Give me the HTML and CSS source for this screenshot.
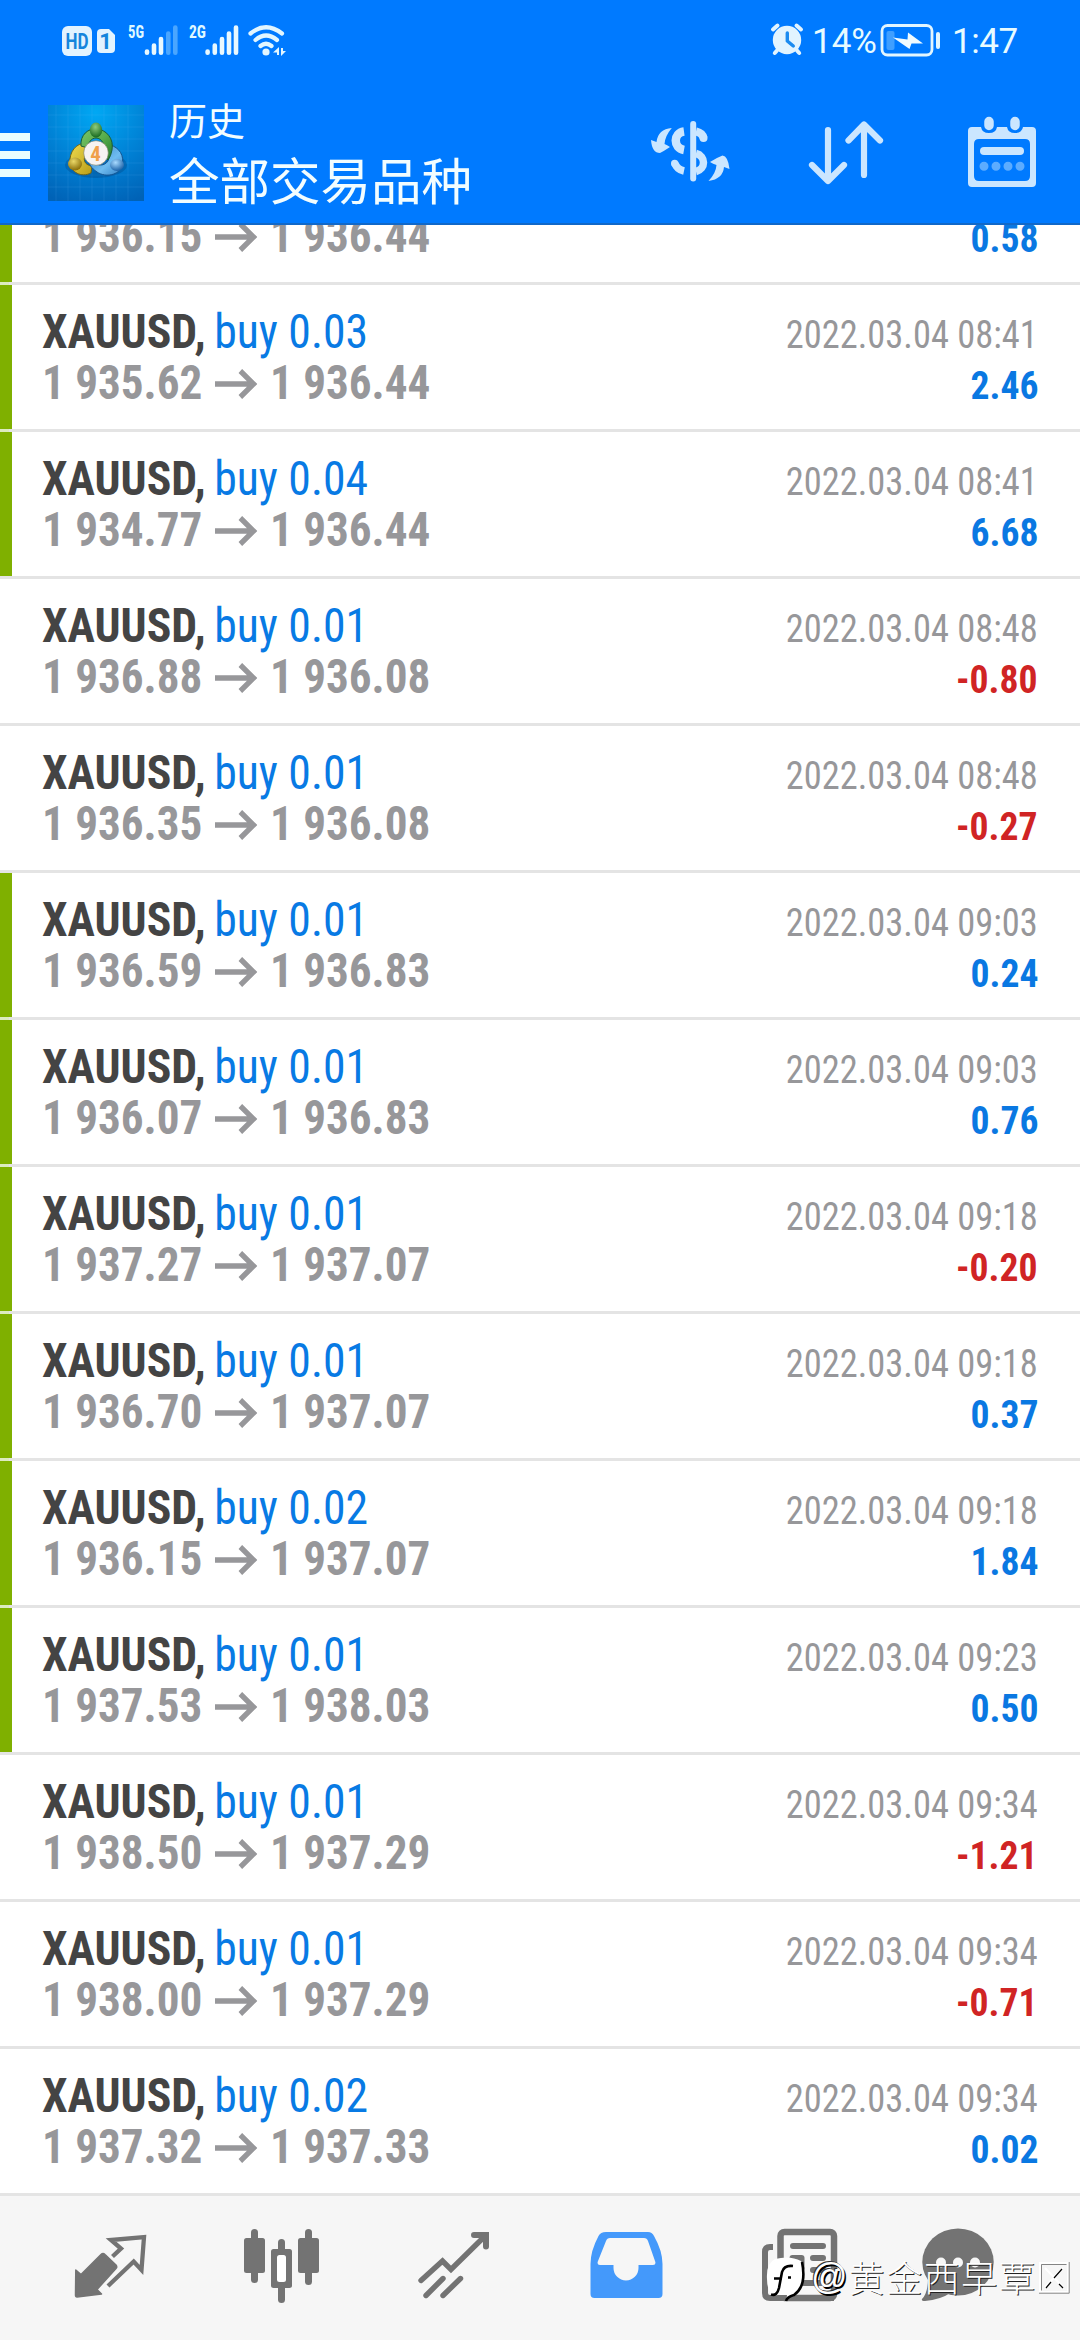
FILE: index.html
```
<!DOCTYPE html>
<html lang="zh-CN">
<head>
<meta charset="utf-8">
<title>历史</title>
<link rel="stylesheet" href="styles.css">
</head>
<body>
<svg width="0" height="0" class="defs">
  <symbol id="arrow" viewBox="0 0 45 30"><path d="M0 15H41M27 2L41 15L27 28" fill="none" stroke="#97979a" stroke-width="5.6"/></symbol>
</svg>
<div class="screen">
  <header class="header">
    <div class="status">
      <svg class="status-left" width="230" height="44" viewBox="60 18 230 44">
        <rect x="62" y="26" width="30" height="30" rx="6" fill="#e2f3ff"/>
        <text x="77" y="48.6" class="badge" textLength="23" lengthAdjust="spacingAndGlyphs">HD</text>
        <path d="M101 29h8l6 6v14a4 4 0 0 1-4 4h-10a4 4 0 0 1-4-4v-16a4 4 0 0 1 4-4z" fill="#e2f3ff"/>
        <text x="105.5" y="48.6" class="badge">1</text>
        <text x="128" y="38" class="net" textLength="16" lengthAdjust="spacingAndGlyphs">5G</text>
        <g stroke="#e8f8ff" stroke-width="4.6" stroke-linecap="round">
          <path d="M147 51.5v1.2M154 45.5v7.2M161 39v13.7"/>
          <path d="M168.3 33.500v19.200M175.300 27.500v25.200" stroke="#4aa6ff"/>
          <path d="M207.600 51.500v1.200M214.800 45.500v7.200M222 39v13.700M229 33.500v19.200M236 27.500v25.200"/>
        </g>
        <text x="189" y="38" class="net" textLength="17" lengthAdjust="spacingAndGlyphs">2G</text>
        <g fill="none" stroke="#e2f6ff" stroke-width="4.200" stroke-linecap="round">
          <path d="M250.500 33.500Q266 21 282 33.500M255.500 40Q266 31 277 40M260.500 46Q266 41.500 271.500 46"/>
        </g>
        <circle cx="266" cy="52" r="3.600" fill="#e2f6ff"/>
        <path d="M273 52.500L279 47v8h-2v-2.500zM281 48v8l5-5h-3V48z" fill="#e2f6ff"/>
      </svg>
      <div class="status-right">
        <svg width="36" height="36" viewBox="767 23 36 36">
          <g stroke="#e2f4ff" stroke-width="4" stroke-linecap="round" fill="none"><path d="M771 30.500l4.500-4M799 30.500l-4.500-4M775 51.500l-2.200 2.500M795 51.500l2.200 2.500"/></g>
          <circle cx="785" cy="41" r="14.200" fill="#e2f4ff"/>
          <path d="M785.300 34v8l6 5" fill="none" stroke="#1b8bf0" stroke-width="3.400" stroke-linecap="round" stroke-linejoin="round"/>
        </svg>
        <span class="battery-text">14%</span>
        <svg class="battery" width="62" height="36" viewBox="880 22 62 36">
          <rect x="882" y="25.500" width="50" height="29.500" rx="5.500" fill="none" stroke="#e2f6ff" stroke-width="2.800"/>
          <rect x="886.500" y="31" width="8" height="19" rx="2" fill="#409fff"/>
          <path d="M893 37.500L907.500 39.500L908 32.500L923 43.500L911.500 43.500L909.500 49Z" fill="#f0fbff"/>
          <path d="M938 34v13" stroke="#e2f6ff" stroke-width="4" stroke-linecap="round"/>
        </svg>
        <span class="clock">1:47</span>
      </div>
    </div>
    <div class="toolbar">
      <div class="menu"><i></i><i></i><i></i></div>
      <svg class="logo" width="96" height="96" viewBox="0 0 96 96">
        <defs>
          <radialGradient id="bg" cx=".5" cy=".08" r="1"><stop offset="0" stop-color="#00a8f4"/><stop offset=".55" stop-color="#0080d4"/><stop offset="1" stop-color="#0062b6"/></radialGradient>
          <linearGradient id="gr" x1="0" y1="0" x2="1" y2="1"><stop offset="0" stop-color="#7cc46a"/><stop offset=".5" stop-color="#57ad4c"/><stop offset="1" stop-color="#237a2c"/></linearGradient>
          <linearGradient id="ye" x2="1" y2="1"><stop offset="0" stop-color="#f0dc50"/><stop offset="1" stop-color="#b89d18"/></linearGradient>
          <linearGradient id="bl" x2="1" y2="1"><stop offset="0" stop-color="#2a7cc2"/><stop offset=".6" stop-color="#6fbcf0"/><stop offset="1" stop-color="#2f7fc4"/></linearGradient>
          <radialGradient id="gb" cx=".45" cy=".3" r=".7"><stop offset="0" stop-color="#8fcc7c"/><stop offset="1" stop-color="#186a20"/></radialGradient>
          <radialGradient id="yb" cx=".4" cy=".3" r=".7"><stop offset="0" stop-color="#ead868"/><stop offset="1" stop-color="#8a6e08"/></radialGradient>
          <radialGradient id="bb" cx=".4" cy=".3" r=".7"><stop offset="0" stop-color="#a8daff"/><stop offset="1" stop-color="#1c62a8"/></radialGradient>
        </defs>
        <rect width="96" height="96" fill="url(#bg)"/>
        <path d="M8 0v96M20 0v96M32 0v96M44 0v96M56 0v96M68 0v96M80 0v96M0 10h96M0 22h96M0 34h96M0 46h96M0 58h96M0 70h96M0 82h96" stroke="#6cc4ff" stroke-opacity=".13"/>
        <ellipse cx="48" cy="60" rx="31" ry="13" fill="#003c78" opacity=".3"/>
        <path d="M38 38C28 38 21 47 22 58C23 67 33 73 43 68L44 61C36 60 34 54 39 47Z" fill="url(#ye)" stroke="#6d6418"/>
        <path d="M62 40C71 42 77 51 74 61C71 70 58 73 49 67C43 63 41 59 40 55C48 61 56 62 60 56C62 51 62 46 62 40Z" fill="url(#bl)" stroke="#155592"/>
        <path d="M33 41C32 30 40 23 49 24C59 25 66 34 64 45Q63 51 60 55L55 50C58 40 54 33 48 33C43 33 40 38 40 43Z" fill="url(#gr)" stroke="#1b5e35"/>
        <ellipse cx="48" cy="25" rx="6.200" ry="7.500" fill="url(#gb)"/>
        <ellipse cx="27" cy="59" rx="7" ry="6.500" fill="url(#yb)"/>
        <ellipse cx="69" cy="60" rx="7" ry="6" fill="url(#bb)"/>
        <circle cx="48" cy="48" r="12.300" fill="#f6f3f2" stroke="#7a7a60" stroke-opacity=".6"/>
        <text x="47.500" y="55.500" class="logo-num">4</text>
      </svg>
      <div class="titles"><div class="sub">历史</div><div class="main">全部交易品种</div></div>
      <div class="actions">
        <svg width="100" height="100" viewBox="640 105 100 100">
          <g fill="none" stroke="#cbe6ff">
            <path d="M693.200 124v54.500" stroke-width="6" stroke-linecap="round"/>
            <path d="M684 131.500C673 133 673 148 684 150" stroke-width="8.500"/>
            <path d="M675 163.500Q677 169.500 684 171" stroke-width="7.500"/><circle cx="674.700" cy="163.500" r="3.700" fill="#cbe6ff" stroke="none"/>
            <path d="M696 131.500Q702.500 133 703.500 138" stroke-width="8"/><circle cx="703.500" cy="138" r="4" fill="#cbe6ff" stroke="none"/>
            <path d="M696 153.500C706 156 706 169 696 171.500" stroke-width="7.500"/>
          </g>
          <path d="M671.800 128Q658 129 656.500 142L651 140Q652 153 660 153Q664 151 670 147Q667 145 664.500 144Q665 136 671.800 128Z" fill="#cbe6ff"/>
          <path d="M708.500 181Q723 179 724 167L729.500 169Q728 156 722.500 155.500Q716 158 710 162Q713 164 716.500 165Q716 173 708.500 181Z" fill="#cbe6ff"/>
        </svg>
        <svg width="100" height="100" viewBox="796 105 100 100">
          <path d="M828 130v50M812 165l16 16l16-16M864 175v-50M848.500 140.500l15.500-16l16 16" fill="none" stroke="#cbe6ff" stroke-width="6.200" stroke-linecap="round" stroke-linejoin="round"/>
        </svg>
        <svg width="100" height="100" viewBox="952 105 100 100">
          <path fill-rule="evenodd" d="M972 127h9q1 6 8 6t8-6h10q1 6 8 6t8-6h9q4 0 4 4v52q0 4-4 4h-60q-4 0-4-4v-52q0-4 4-4zM979 139q-5 0-5 5v32q0 5 5 5h46q5 0 5-5v-32q0-5-5-5z" fill="#cbe6ff"/>
          <path d="M989 121.500v4M1015 121.500v4" stroke="#cbe6ff" stroke-width="9.500" stroke-linecap="round"/>
          <path d="M984 151h36" stroke="#cbe6ff" stroke-width="8" stroke-linecap="round"/>
          <path d="M984 166.300h.01M996 166.300h.01M1008 166.300h.01M1020 166.300h.01" stroke="#5cacff" stroke-width="9" stroke-linecap="round"/>
        </svg>
      </div>
    </div>
  </header>

  <main class="viewport">
    <div class="list">
      <div class="row on partial"><div class="line"><span class="price">1 936.15<svg><use href="#arrow"/></svg>1 936.44</span><strong>0.58</strong></div></div>
      <div class="row on"><div class="line"><span class="deal"><b>XAUUSD,</b> <span>buy 0.03</span></span><time>2022.03.04 08:41</time></div><div class="line"><span class="price">1 935.62<svg><use href="#arrow"/></svg>1 936.44</span><strong>2.46</strong></div></div>
      <div class="row on"><div class="line"><span class="deal"><b>XAUUSD,</b> <span>buy 0.04</span></span><time>2022.03.04 08:41</time></div><div class="line"><span class="price">1 934.77<svg><use href="#arrow"/></svg>1 936.44</span><strong>6.68</strong></div></div>
      <div class="row"><div class="line"><span class="deal"><b>XAUUSD,</b> <span>buy 0.01</span></span><time>2022.03.04 08:48</time></div><div class="line"><span class="price">1 936.88<svg><use href="#arrow"/></svg>1 936.08</span><strong class="loss">-0.80</strong></div></div>
      <div class="row"><div class="line"><span class="deal"><b>XAUUSD,</b> <span>buy 0.01</span></span><time>2022.03.04 08:48</time></div><div class="line"><span class="price">1 936.35<svg><use href="#arrow"/></svg>1 936.08</span><strong class="loss">-0.27</strong></div></div>
      <div class="row on"><div class="line"><span class="deal"><b>XAUUSD,</b> <span>buy 0.01</span></span><time>2022.03.04 09:03</time></div><div class="line"><span class="price">1 936.59<svg><use href="#arrow"/></svg>1 936.83</span><strong>0.24</strong></div></div>
      <div class="row on"><div class="line"><span class="deal"><b>XAUUSD,</b> <span>buy 0.01</span></span><time>2022.03.04 09:03</time></div><div class="line"><span class="price">1 936.07<svg><use href="#arrow"/></svg>1 936.83</span><strong>0.76</strong></div></div>
      <div class="row on"><div class="line"><span class="deal"><b>XAUUSD,</b> <span>buy 0.01</span></span><time>2022.03.04 09:18</time></div><div class="line"><span class="price">1 937.27<svg><use href="#arrow"/></svg>1 937.07</span><strong class="loss">-0.20</strong></div></div>
      <div class="row on"><div class="line"><span class="deal"><b>XAUUSD,</b> <span>buy 0.01</span></span><time>2022.03.04 09:18</time></div><div class="line"><span class="price">1 936.70<svg><use href="#arrow"/></svg>1 937.07</span><strong>0.37</strong></div></div>
      <div class="row on"><div class="line"><span class="deal"><b>XAUUSD,</b> <span>buy 0.02</span></span><time>2022.03.04 09:18</time></div><div class="line"><span class="price">1 936.15<svg><use href="#arrow"/></svg>1 937.07</span><strong>1.84</strong></div></div>
      <div class="row on"><div class="line"><span class="deal"><b>XAUUSD,</b> <span>buy 0.01</span></span><time>2022.03.04 09:23</time></div><div class="line"><span class="price">1 937.53<svg><use href="#arrow"/></svg>1 938.03</span><strong>0.50</strong></div></div>
      <div class="row"><div class="line"><span class="deal"><b>XAUUSD,</b> <span>buy 0.01</span></span><time>2022.03.04 09:34</time></div><div class="line"><span class="price">1 938.50<svg><use href="#arrow"/></svg>1 937.29</span><strong class="loss">-1.21</strong></div></div>
      <div class="row"><div class="line"><span class="deal"><b>XAUUSD,</b> <span>buy 0.01</span></span><time>2022.03.04 09:34</time></div><div class="line"><span class="price">1 938.00<svg><use href="#arrow"/></svg>1 937.29</span><strong class="loss">-0.71</strong></div></div>
      <div class="row"><div class="line"><span class="deal"><b>XAUUSD,</b> <span>buy 0.02</span></span><time>2022.03.04 09:34</time></div><div class="line"><span class="price">1 937.32<svg><use href="#arrow"/></svg>1 937.33</span><strong>0.02</strong></div></div>
    </div>
  </main>

  <nav class="nav">
    <svg width="100" height="100" viewBox="60 2216 100 100">
      <path d="M75.800 2270L81 2274.500L101 2254.500Q103 2252.500 105 2254.500L116 2265Q117.500 2267 116 2268.500L97 2289.500L101.500 2294L77 2297Q75.500 2297 75.500 2295Z" fill="#737373" stroke="#737373" stroke-width="1.500" stroke-linejoin="round"/>
      <path d="M112.500 2256.500L121 2248.500L111 2240L144 2237.200L141.500 2270L133.700 2261.500L108 2286" fill="none" stroke="#737373" stroke-width="4.300"/>
    </svg>
    <svg width="100" height="100" viewBox="232 2216 100 100" fill="#737373">
      <rect x="244" y="2238" width="21" height="35" rx="2.500"/><rect x="251" y="2229" width="7" height="54" rx="3.500"/>
      <rect x="298" y="2238" width="21" height="35" rx="2.500"/><rect x="305" y="2229" width="7" height="56" rx="3.500"/>
      <rect x="278" y="2239" width="7" height="64" rx="3.500"/><rect x="271" y="2249" width="21" height="39" rx="2.500"/>
      <rect x="277" y="2255" width="9" height="27" rx="2.500" fill="#fff"/>
    </svg>
    <svg width="100" height="100" viewBox="404 2216 100 100" fill="none" stroke="#737373" stroke-width="5.400" stroke-linecap="round">
      <path d="M421 2280.500L442.500 2261L451 2269.500L485 2236"/>
      <path d="M474 2235H486V2246.500" stroke-width="6"/>
      <path d="M443 2278.500L426 2295.500M460.500 2278.500L443 2295.500"/>
    </svg>
    <svg width="100" height="100" viewBox="576 2216 100 100">
      <path fill-rule="evenodd" d="M606 2232h42q4 0 6 4q8.500 15 8.500 28v30q0 4-4 4h-64q-4 0-4-4v-30q0-13 8-28q2-4 7.500-4zM610 2238q-3 0-4 3l-8 20q-1.500 4 2 4h13.500v3a12 12 0 0 0 25 0v-3h14.500q3.500 0 2-4l-7-20q-1-3-4-3z" fill="#4499fb"/>
    </svg>
    <svg width="100" height="100" viewBox="748 2216 100 100">
      <path d="M773 2247h-3q-5 0-5 5v41q0 5 5 5h64" fill="none" stroke="#737373" stroke-width="6"/>
      <rect x="780.500" y="2232" width="53.500" height="66" rx="4" fill="#f7f7f7" stroke="#737373" stroke-width="6.500"/>
      <path d="M793 2246h30M813 2258h10" stroke="#737373" stroke-width="6" stroke-linecap="round"/>
      <rect x="789.500" y="2255" width="15" height="16" rx="3" fill="#737373"/>
      <path d="M813 2270h10M793 2283h30" stroke="#737373" stroke-width="6" stroke-linecap="round"/>
    </svg>
    <svg width="100" height="100" viewBox="908 2216 100 100">
      <ellipse cx="958" cy="2262" rx="35.700" ry="33.500" fill="#737373"/>
      <path d="M928 2278Q928 2293 922 2299Q921 2301 925 2301Q940 2300 952 2292Z" fill="#737373"/>
      <g fill="#f7f7f7"><circle cx="941" cy="2262.500" r="5"/><circle cx="958" cy="2262.500" r="5"/><circle cx="975" cy="2262.500" r="5"/></g>
    </svg>
  </nav>

  <div class="watermark">
    <svg width="46" height="50" viewBox="766 2254 46 50">
      <path d="M768 2281Q767 2265 776 2261Q791 2257 802 2263Q806 2272 804 2286Q802 2293 795 2298Q789 2300 787 2303Q788 2299 788 2297H779L773 2298Q768 2291 768 2281Z" fill="#fff"/>
      <path d="M772 2296.500Q778 2298.500 780 2290L783 2274Q785 2267 794 2268M775 2280.500H783M789 2279.500h3M803 2264Q808 2288 795 2297Q788 2299 787 2303" fill="none" stroke="#000" stroke-width="2.600"/>
    </svg>
    <span class="at">@</span><span class="name">黄金西早覃</span>
    <svg class="tofu" width="32" height="34" viewBox="0 0 32 34"><path d="M2 3H30V32H2ZM7 8L25 27M25 8L7 27" fill="none" stroke="#fff" stroke-width="2"/><path d="M3.500 4.500H28.500M31.200 2V33.200H1M3.500 4.500V30.500" fill="none" stroke="#777" stroke-width=".9"/><path d="M24 9L16 18M21 24L25 28M13 22L8 28" stroke="#000" stroke-width="1.200"/></svg>
  </div>
</div>
</body>
</html>
```
FILE: styles.css
```
body {
  margin: 0;
  background: #fff;
}

.defs {
  position: absolute;
}

.screen {
  position: relative;
  width: 1080px;
  height: 2340px;
  overflow: hidden;
  display: flex;
  flex-direction: column;
  font-family: "Roboto Condensed", "Noto Sans CJK SC", sans-serif;
}

.header {
  height: 225px;
  box-sizing: border-box;
  flex: none;
  background: #007aff;
  border-bottom: 2px solid #1168c8;
  color: #f2fdff;
}

.status {
  height: 80px;
  display: flex;
  justify-content: space-between;
  align-items: center;
  padding: 0 62px 0 60px;
}

.status-right {
  display: flex;
  align-items: center;
  font: 400 35px/44px Roboto, sans-serif;
  color: #e8fbff;
}

.battery-text {
  width: 68px;
  margin-left: 7px;
  padding-top: 3px;
}

.clock {
  width: 66px;
  margin-left: 10px;
  padding-top: 3px;
  letter-spacing: -0.4px;
}

.badge {
  font: 700 22px Roboto, sans-serif;
  fill: #1585dc;
  text-anchor: middle;
}

.net {
  font: 700 18px "Roboto Condensed", sans-serif;
  fill: #dff8ff;
}

.toolbar {
  height: 143px;
  display: flex;
  align-items: center;
  padding: 0 28px 0 0;
}

.menu {
  width: 30px;
  display: flex;
  flex-direction: column;
  gap: 10px;
  margin: 7px 18px 0 0;
}

.menu i {
  height: 8px;
  background: #e9fdff;
}

.logo {
  margin-top: 3px;
}

.logo-num {
  font: 700 21px "Roboto Condensed", sans-serif;
  fill: #f0a04b;
  text-anchor: middle;
}

.titles {
  margin: -4px 0 0 25px;
  font-family: "Noto Sans CJK SC", sans-serif;
}

.sub {
  font-size: 38px;
  line-height: 57px;
}

.main {
  font-size: 50.5px;
  line-height: 62px;
}

.actions {
  display: flex;
  gap: 56px;
  margin: 7px 0 0 auto;
}

.viewport {
  flex: 1;
  min-height: 0;
  overflow: hidden;
}

.row {
  height: 147px;
  box-sizing: border-box;
  padding: 21px 42px 0;
  border-bottom: 3px solid #e4e4e4;
}

/* scrolled part-way under the header */
.row.partial {
  display: flow-root;
  height: 60px;
  padding-top: 0;
}

.row.partial .line {
  margin-top: -15px;
}

.row.on {
  background: linear-gradient(#7fb000, #7fb000) 0 0 / 12px 144px no-repeat;
}

.row.on:has(+ .on) {
  border-image: linear-gradient(90deg, #dcebbf 12px, #e4e4e4 12px) 3;
}

.line {
  height: 51px;
  line-height: 51px;
  display: flex;
  justify-content: space-between;
  align-items: baseline;
  white-space: nowrap;
}

.deal,
.price {
  font-size: 48px;
  transform-origin: 0 50%;
}

.deal {
  transform: scaleX(0.952);
  color: #087ae4;
}

.deal b {
  color: #444;
  margin-right: -2px;
}

.price {
  transform: scaleX(0.94);
  font-weight: 700;
  color: #97979a;
}

.price svg {
  width: 45px;
  height: 30px;
  margin: 0 13.5px;
}

time,
strong {
  font-size: 39px;
  transform-origin: 100% 50%;
}

time {
  color: #97979a;
  transform: scaleX(0.934);
}

strong {
  color: #0a78e2;
  transform: scaleX(0.965);
}

.loss {
  color: #d02424;
}

.nav {
  flex: none;
  height: 144px;
  box-sizing: border-box;
  padding: 20px 0 0 60px;
  background: #f6f6f6;
  display: flex;
  gap: 72px;
}

.nav svg {
  flex: none;
}

.nav svg:last-child {
  margin-left: -12px;
}

.watermark {
  position: absolute;
  left: 765px;
  top: 2252px;
  height: 50px;
  display: flex;
  align-items: center;
  color: #fff;
  white-space: nowrap;
}

.at {
  font: 400 36px/50px "Liberation Sans", sans-serif;
  text-shadow: 1.5px 1.5px 0 #000, -1px -1px 0 #333;
}

.name {
  font: 300 36px/50px "Noto Sans CJK SC", sans-serif;
  letter-spacing: 1.6px;
  margin: -2px 0 0 1px;
  text-shadow: 1px 1px 0 #222;
}

.tofu {
  margin-left: 1px;
}
```
